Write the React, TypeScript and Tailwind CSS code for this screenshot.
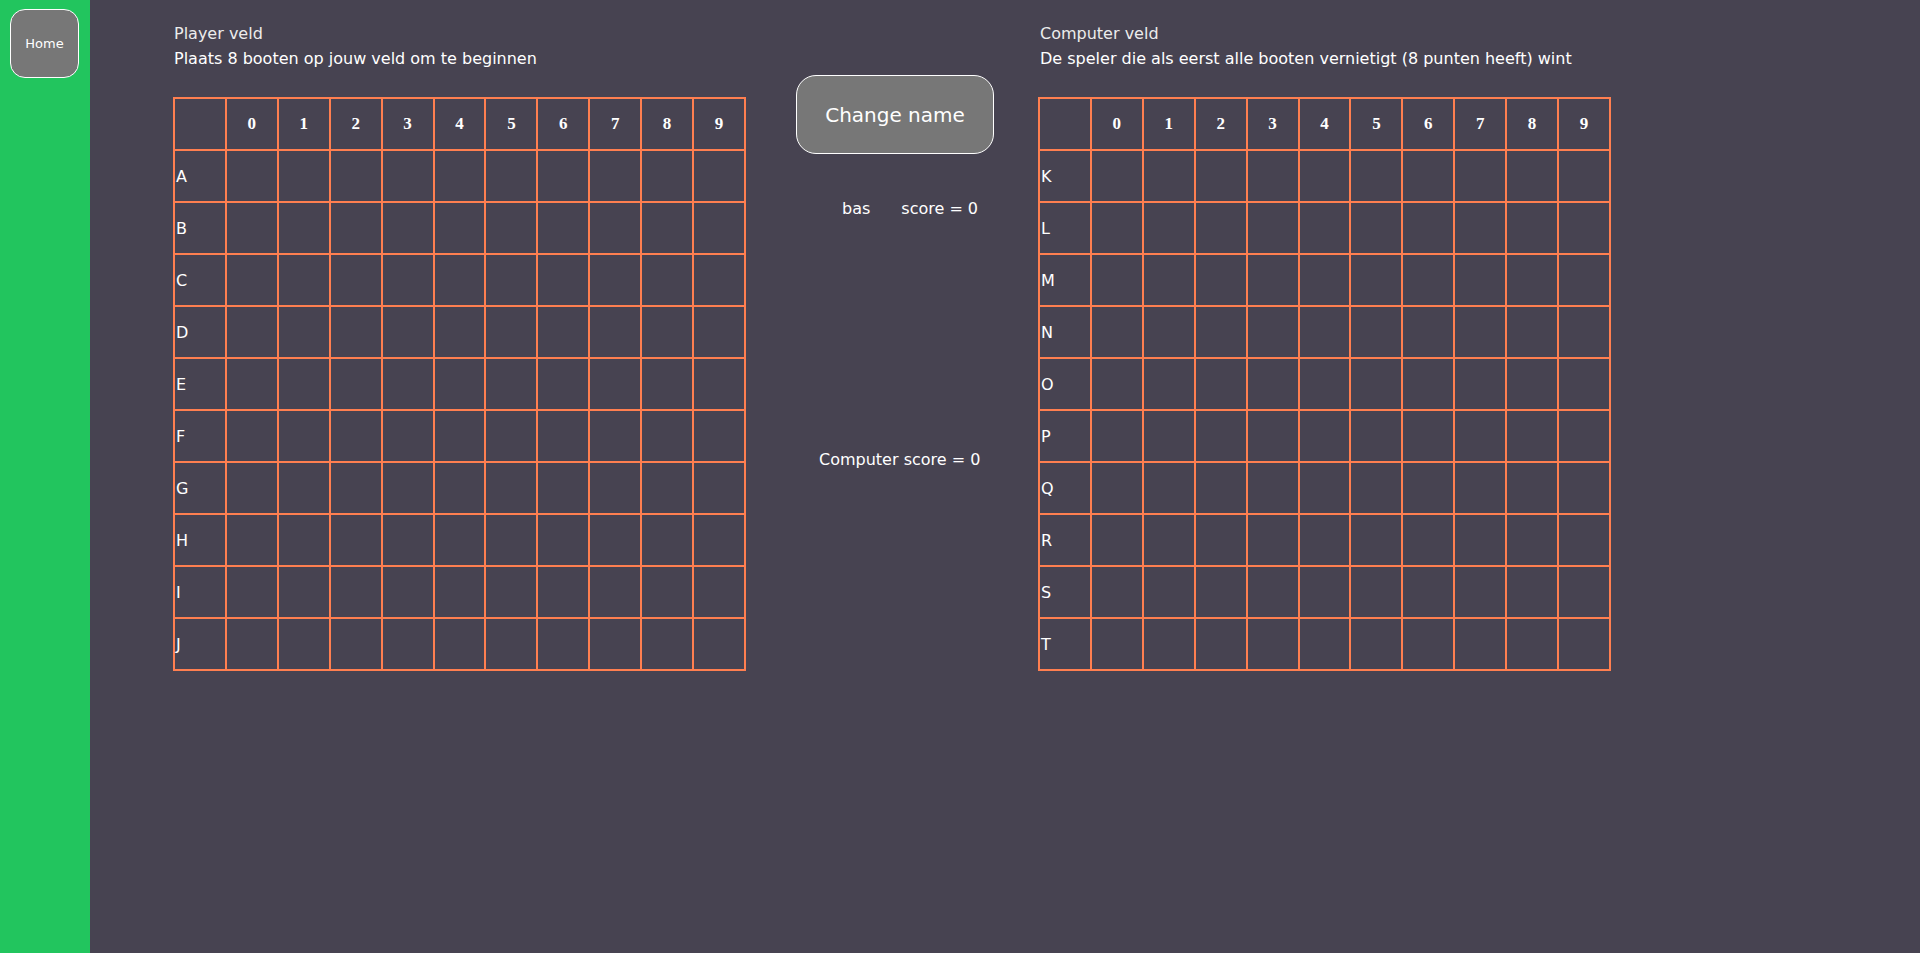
import React from 'react';

const cols = ['0', '1', '2', '3', '4', '5', '6', '7', '8', '9'];

// speelveld met letters links en cijfers boven
const Board: React.FC<{ rows: string[] }> = ({ rows }) => (
  <table className="border-collapse border-2 border-[#ff7f50]">
    <thead>
      <tr>
        <th className="w-[52px] h-[52px] border-2 border-[#ff7f50]"></th>
        {cols.map((c) => (
          <th
            key={c}
            className="w-[52px] h-[52px] border-2 border-[#ff7f50] text-white font-bold text-[17px] text-center"
            style={{ fontFamily: '"Liberation Serif", serif' }}
          >
            {c}
          </th>
        ))}
      </tr>
    </thead>
    <tbody>
      {rows.map((r) => (
        <tr key={r}>
          <td className="w-[52px] h-[52px] border-2 border-[#ff7f50] text-white text-[16px] text-left align-middle p-0 pl-[1px] pt-[2px]">
            {r}
          </td>
          {cols.map((c) => (
            <td key={c} className="w-[52px] h-[52px] border-2 border-[#ff7f50]"></td>
          ))}
        </tr>
      ))}
    </tbody>
  </table>
);

const App: React.FC = () => {
  return (
    <div
      className="flex h-[953px] w-full bg-[#474351] overflow-hidden"
      style={{ fontFamily: '"DejaVu Sans", Verdana, sans-serif' }}
    >
      {/* zijbalk */}
      <div className="w-[90px] shrink-0 bg-[#22c55e]">
        <button className="mt-[9px] ml-[10px] w-[69px] h-[69px] rounded-[15px] border border-white bg-[#777777] text-white text-[13px]">
          Home
        </button>
      </div>

      <div className="flex pl-[83px]">
        {/* speler */}
        <div className="w-[573px] shrink-0 pt-[21px]">
          <p className="pl-[1px] text-[16px] leading-[25px] text-[#ececec]">Player veld</p>
          <p className="pl-[1px] text-[16px] leading-[25px] text-white">Plaats 8 booten op jouw veld om te beginnen</p>
          <div className="mt-[26px]">
            <Board rows={['A', 'B', 'C', 'D', 'E', 'F', 'G', 'H', 'I', 'J']} />
          </div>
        </div>

        {/* midden */}
        <div className="ml-[50px] w-[198px] shrink-0 flex flex-col">
          <button className="mt-[75px] w-[198px] h-[79px] rounded-[20px] border border-white bg-[#777777] text-white text-[20px]">
            Change name
          </button>
          <div className="mt-[45px] ml-[46px] flex gap-[31px] text-[16px] leading-[20px] text-white">
            <span>bas</span>
            <span>score = 0</span>
          </div>
          <p className="mt-[231px] ml-[23px] text-[16px] leading-[20px] text-white whitespace-nowrap">Computer score = 0</p>
        </div>

        {/* computer */}
        <div className="ml-[44px] w-[573px] shrink-0 pt-[21px]">
          <p className="pl-[2px] text-[16px] leading-[25px] text-[#ececec]">Computer veld</p>
          <p className="pl-[2px] text-[16px] leading-[25px] text-white whitespace-nowrap">
            De speler die als eerst alle booten vernietigt (8 punten heeft) wint
          </p>
          <div className="mt-[26px]">
            <Board rows={['K', 'L', 'M', 'N', 'O', 'P', 'Q', 'R', 'S', 'T']} />
          </div>
        </div>
      </div>
    </div>
  );
};

export default App;
